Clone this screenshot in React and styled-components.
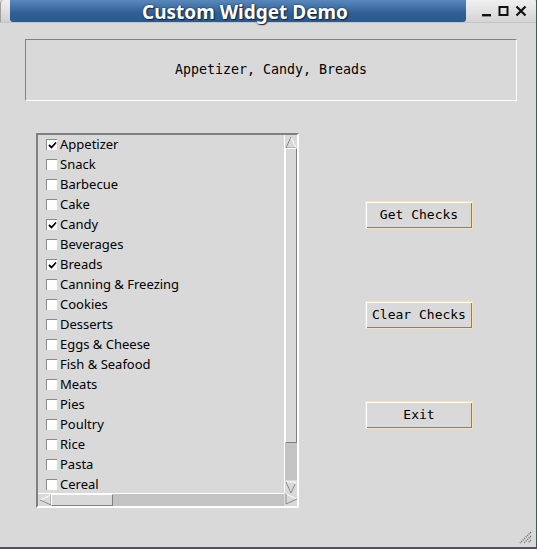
import React from "react";
import styled, { createGlobalStyle } from "styled-components";

const Global = createGlobalStyle`
  html, body { margin: 0; padding: 0; background: #d9d9d9; }
  * { box-sizing: border-box; }
`;

const Window = styled.div`
  width: 537px;
  height: 549px;
  background: #d9d9d9;
  display: flex;
  flex-direction: column;
  border-right: 1px solid #4c5260;
  border-bottom: 2px solid #4c5260;
  position: relative;
  overflow: hidden;
`;

const TitleBar = styled.div`
  height: 23px;
  display: flex;
  align-items: stretch;
  background: #dcdcdc;
  border-bottom: 1px solid #c4c4c4;
`;

const TitleCorner = styled.div`
  width: 10px;
  background: linear-gradient(#f0f0f0, #cfcfcf);
  border-top-left-radius: 4px;
  border-left: 1px solid #a0a0a0;
`;

const TitleBlue = styled.div`
  flex: 0 0 456px;
  background: linear-gradient(#5a88bd, #2e5f95 60%, #2a5a8f);
  border-radius: 0 0 3px 3px;
  display: flex;
  align-items: center;
  justify-content: center;
  color: #fff;
  font-family: "Noto Sans", "DejaVu Sans", sans-serif;
  font-weight: bold;
  font-size: 19px;
  line-height: 22px;
  text-shadow: 0 0 2px #10243c, 1px 1px 1px #10243c;
  padding: 2px 0 0 14px;
`;

const TitleButtons = styled.div`
  flex: 1;
  display: flex;
  align-items: center;
  justify-content: space-evenly;
  padding: 0 4px 0 10px;
  background: linear-gradient(#f0f0f0, #d4d4d4);
  border-top-right-radius: 4px;
`;

const Content = styled.div`
  flex: 1;
  display: flex;
  flex-direction: column;
  padding: 16px 19px 0 25px;
`;

const LabelBox = styled.div`
  height: 62px;
  border-top: 1px solid #808080;
  border-left: 1px solid #808080;
  border-bottom: 1px solid #ffffff;
  border-right: 1px solid #ffffff;
  display: flex;
  align-items: center;
  justify-content: center;
  font-family: "DejaVu Sans Mono", monospace;
  font-size: 13.3px;
  color: #000;
  padding-bottom: 1px;
`;

const MainRow = styled.div`
  display: flex;
  margin-top: 32px;
  padding-left: 11px;
`;

const ListFrame = styled.div`
  width: 263px;
  height: 375px;
  border-top: 2px solid #808080;
  border-left: 2px solid #808080;
  border-bottom: 2px solid #ffffff;
  border-right: 2px solid #ffffff;
  display: grid;
  grid-template-columns: 1fr 13px;
  grid-template-rows: 1fr 13px;
`;

const ListArea = styled.div`
  overflow: hidden;
  background: #d9d9d9;
  display: flex;
  flex-direction: column;
`;

const Row = styled.div`
  height: 20px;
  display: flex;
  align-items: center;
  padding: 0 0 2px 8px;
  font-family: "Noto Sans", "DejaVu Sans", sans-serif;
  font-size: 13px;
  color: #000;
  flex-shrink: 0;
`;

const Box = styled.span`
  width: 11px;
  height: 11px;
  background: #fff;
  border-top: 1px solid #8a8a8a;
  border-left: 1px solid #8a8a8a;
  margin-right: 3px;
  margin-top: 1px;
  display: inline-flex;
  align-items: center;
  justify-content: center;
`;

const VScroll = styled.div`
  background: #c3c3c3;
  display: flex;
  flex-direction: column;
  border-left: 1px solid #ffffff;
`;

const HScroll = styled.div`
  background: #c3c3c3;
  display: flex;
  border-top: 1px solid #ffffff;
`;

const Corner = styled.div`
  background: #d9d9d9;
`;

const Arrow = styled.div`
  width: ${(p) => p.$w}px;
  height: ${(p) => p.$h}px;
  flex-shrink: 0;
  background: #d9d9d9;
  display: flex;
  align-items: center;
  justify-content: center;
`;

const Slider = styled.div`
  background: #d9d9d9;
  border-top: 1px solid #ffffff;
  border-left: 1px solid #ffffff;
  border-bottom: 1px solid #808080;
  border-right: 1px solid #808080;
  flex-shrink: 0;
  width: ${(p) => (p.$w ? `${p.$w}px` : "auto")};
  height: ${(p) => (p.$h ? `${p.$h}px` : "auto")};
`;

const Spacer = styled.div`
  flex: 1;
`;

const ButtonCol = styled.div`
  display: flex;
  flex-direction: column;
  padding-top: 68px;
  margin-left: 66px;
  gap: 72px;
`;

const Button = styled.button`
  width: 108px;
  height: 28px;
  background: #d9d9d9;
  font-family: "DejaVu Sans Mono", monospace;
  font-size: 13px;
  color: #000;
  padding: 0 0 1px 0;
  margin: 0;
  border: 1px solid #fbe2ac;
  box-shadow: inset 1px 1px 0 #ffffff, inset -1px -1px 0 #808080;
  outline: none;
`;

const Grip = styled.div`
  position: absolute;
  right: 4px;
  bottom: 3px;
  width: 14px;
  height: 14px;
`;

const items = [
  ["Appetizer", true],
  ["Snack", false],
  ["Barbecue", false],
  ["Cake", false],
  ["Candy", true],
  ["Beverages", false],
  ["Breads", true],
  ["Canning & Freezing", false],
  ["Cookies", false],
  ["Desserts", false],
  ["Eggs & Cheese", false],
  ["Fish & Seafood", false],
  ["Meats", false],
  ["Pies", false],
  ["Poultry", false],
  ["Rice", false],
  ["Pasta", false],
  ["Cereal", false],
];

const Check = () => (
  <svg width="9" height="9" viewBox="0 0 9 9">
    <path d="M1 4 L3.5 6.5 L8 1.5" stroke="#000" strokeWidth="1.8" fill="none" />
  </svg>
);

const Tri = ({ dir }) => {
  const pts = {
    up: "6,1 11,12 1,12",
    down: "1,1 11,1 6,12",
    left: "1,6 12,1 12,11",
    right: "1,1 12,6 1,11",
  }[dir];
  return (
    <svg width="12" height="12" viewBox="0 0 12 12">
      <polygon points={pts} fill="#d9d9d9" stroke="#ffffff" strokeWidth="1" />
      <polygon points={pts} fill="none" stroke="#808080" strokeWidth="1" strokeDasharray="0 12 30" />
    </svg>
  );
};

export default function App() {
  return (
    <>
      <Global />
      <Window>
        <TitleBar>
          <TitleCorner />
          <TitleBlue>Custom Widget Demo</TitleBlue>
          <TitleButtons>
            <svg width="12" height="12" viewBox="0 0 12 12">
              <rect x="1" y="9" width="9" height="2.4" fill="#111" />
            </svg>
            <svg width="12" height="12" viewBox="0 0 12 12">
              <rect x="1.5" y="2" width="8" height="8" fill="none" stroke="#111" strokeWidth="2" />
            </svg>
            <svg width="12" height="12" viewBox="0 0 12 12">
              <path d="M1.5 1.5 L10.5 10.5 M10.5 1.5 L1.5 10.5" stroke="#111" strokeWidth="2.2" />
            </svg>
          </TitleButtons>
        </TitleBar>
        <Content>
          <LabelBox>Appetizer, Candy, Breads</LabelBox>
          <MainRow>
            <ListFrame>
              <ListArea>
                {items.map(([name, on]) => (
                  <Row key={name}>
                    <Box>{on && <Check />}</Box>
                    {name}
                  </Row>
                ))}
              </ListArea>
              <VScroll>
                <Arrow $w={12} $h={13}><Tri dir="up" /></Arrow>
                <Slider $h={295} />
                <Spacer />
                <Arrow $w={12} $h={13}><Tri dir="down" /></Arrow>
              </VScroll>
              <HScroll>
                <Arrow $w={13} $h={12}><Tri dir="left" /></Arrow>
                <Slider $w={62} />
                <Spacer />
              </HScroll>
              <Corner>
                <Arrow $w={13} $h={12}><Tri dir="right" /></Arrow>
              </Corner>
            </ListFrame>
            <ButtonCol>
              <Button>Get Checks</Button>
              <Button>Clear Checks</Button>
              <Button>Exit</Button>
            </ButtonCol>
          </MainRow>
        </Content>
        <Grip>
          <svg width="14" height="14" viewBox="0 0 14 14">
            <path d="M13 2 L2 13 M13 6 L6 13 M13 10 L10 13" stroke="#777" strokeWidth="1.5" strokeDasharray="1.2 0.9" />
          </svg>
        </Grip>
      </Window>
    </>
  );
}
